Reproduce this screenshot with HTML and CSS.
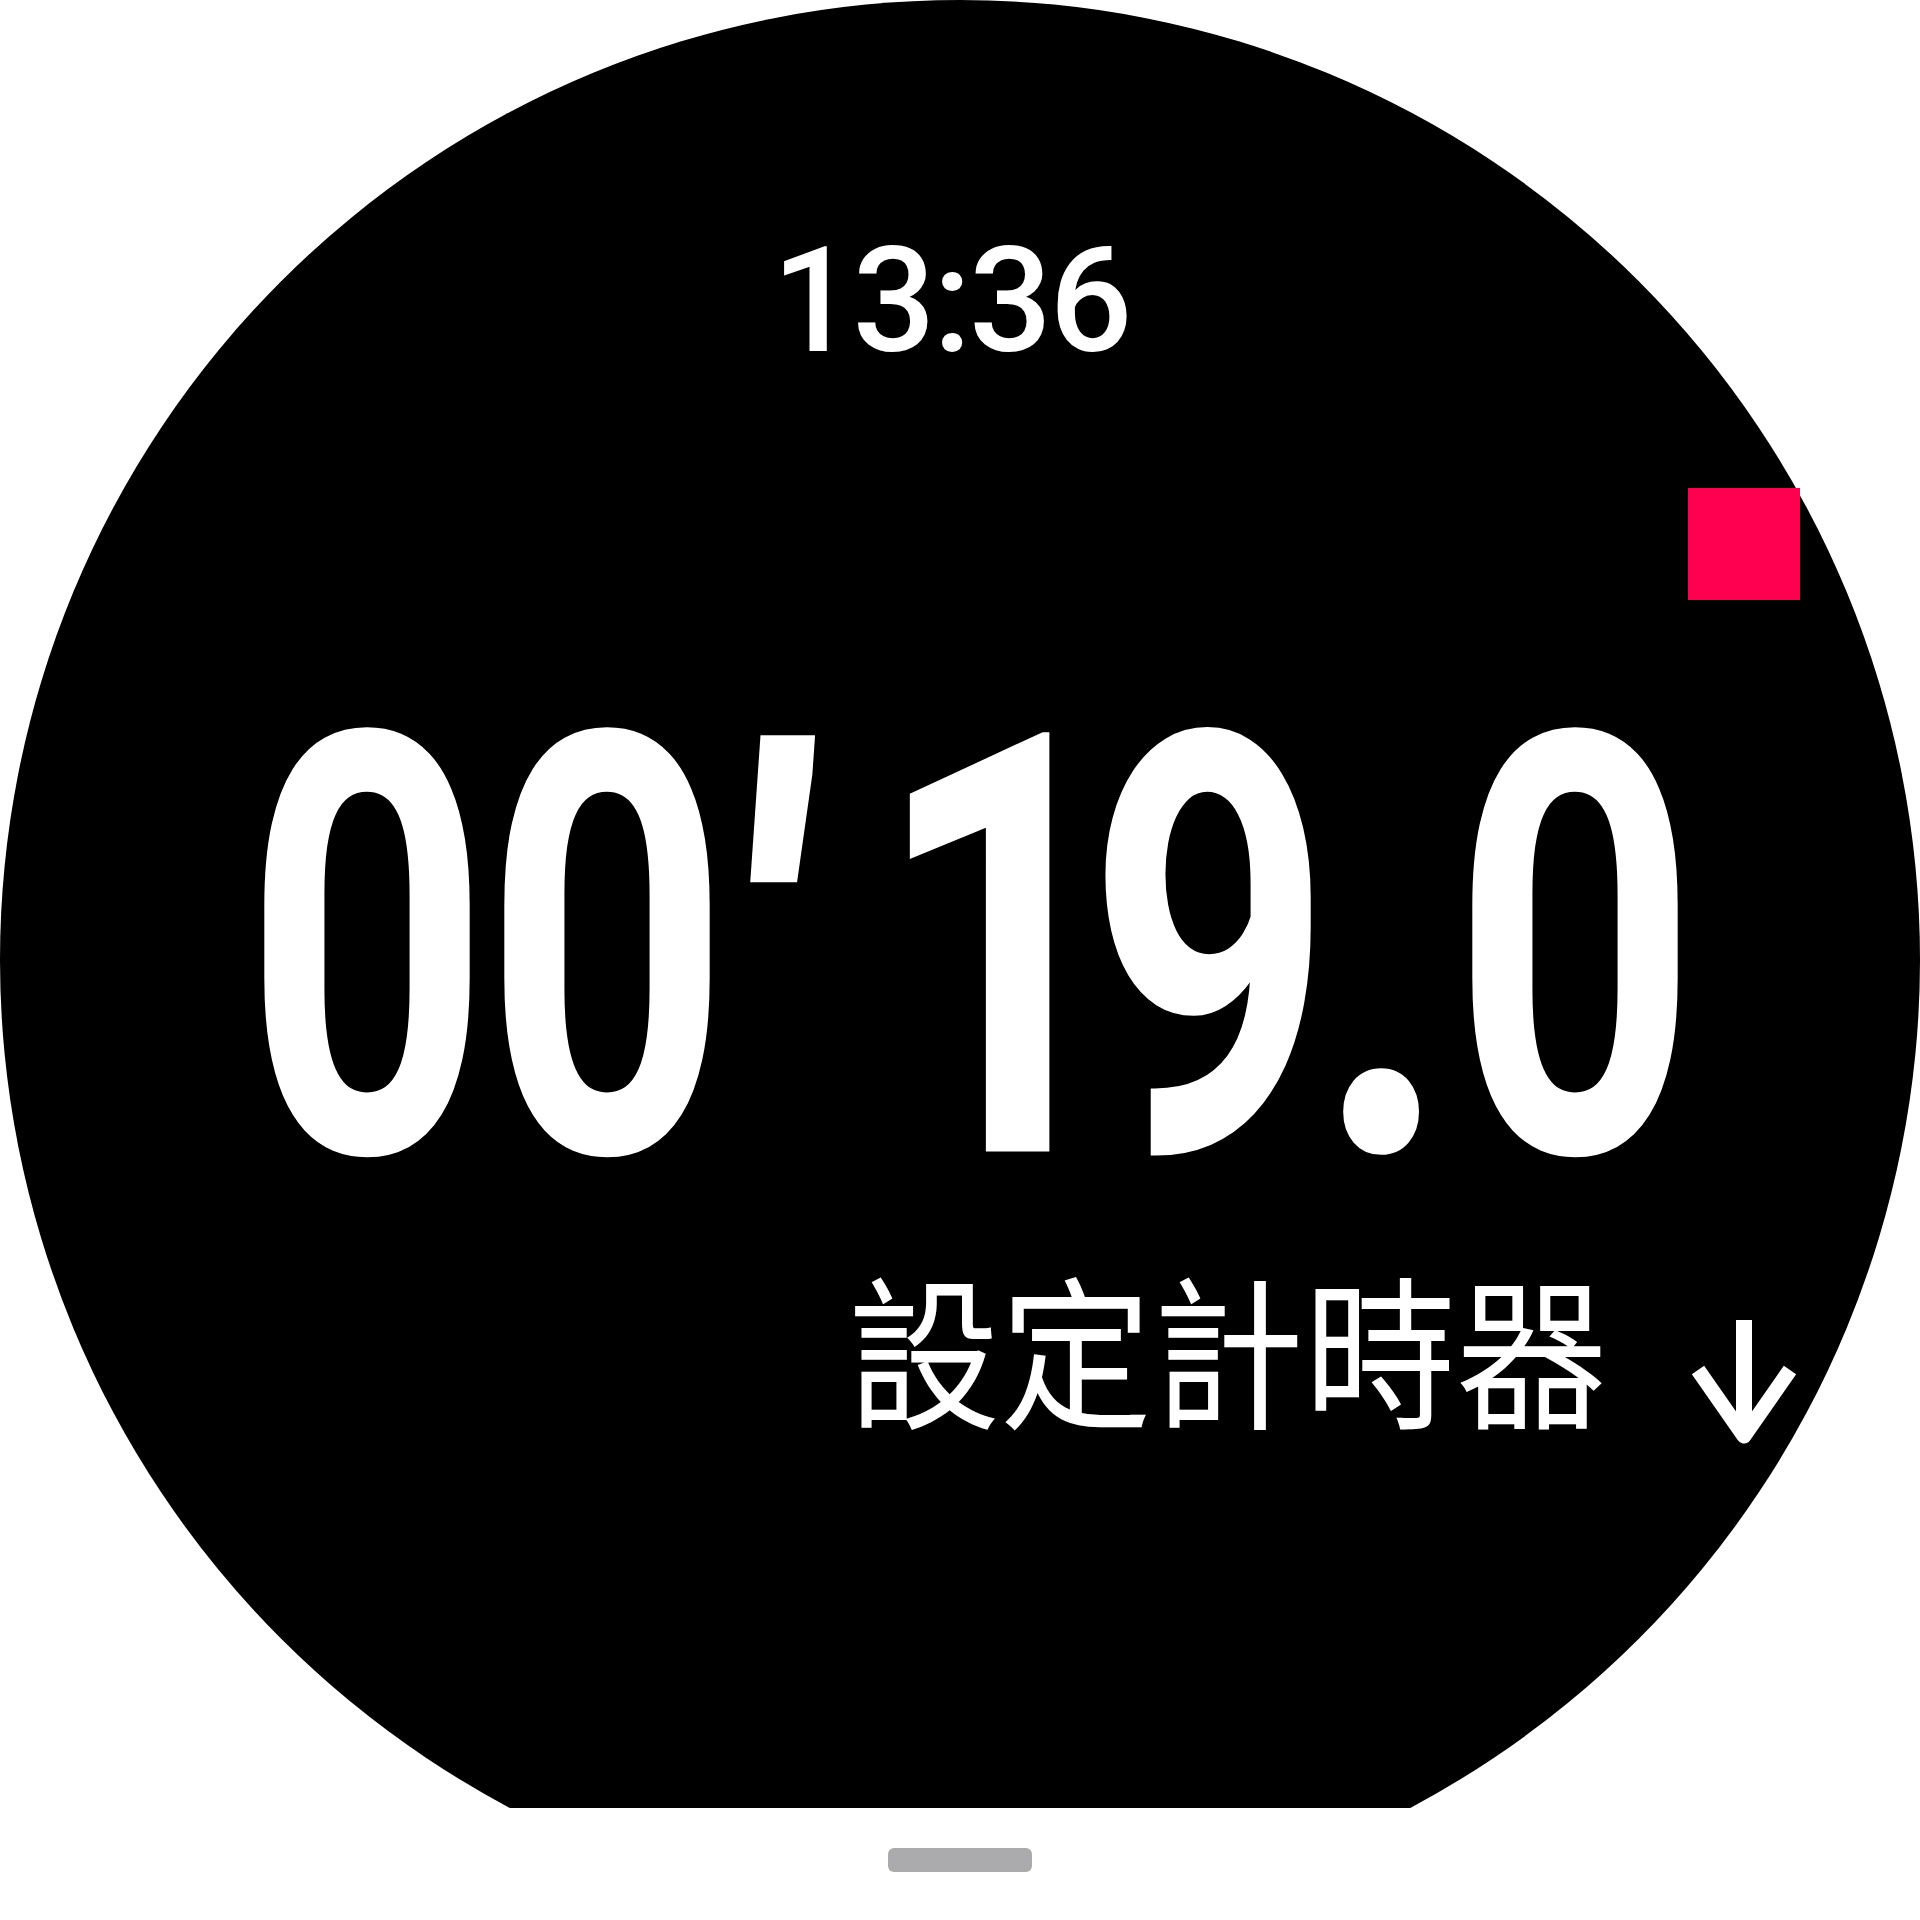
FILE: index.html
```html
<!DOCTYPE html>
<html lang="zh-Hant">
<head>
<meta charset="utf-8">
<title>設定計時器</title>
<link rel="stylesheet" href="styles.css">
</head>
<body>
<div class="device">
  <div class="bezel">
    <div class="face">
      <div class="clock">13:36</div>
      <span class="rec"></span>
      <div class="elapsed">
        <span class="cell c0"><span class="glyph">0</span></span>
        <span class="cell c1"><span class="glyph">0</span></span>
        <span class="cell c2"><span class="glyph tick">'</span></span>
        <span class="cell c3"><span class="glyph one">1</span></span>
        <span class="cell c4"><span class="glyph">9</span></span>
        <span class="cell c5"><span class="glyph dot">.</span></span>
        <span class="cell c6"><span class="glyph">0</span></span>
      </div>
      <div class="caption">
        <span class="caption-text">設定計時器</span>
        <svg class="arrow" viewBox="0 0 112 128" aria-hidden="true">
          <line x1="56" y1="0" x2="56" y2="114" stroke="#fff" stroke-width="16"/>
          <polyline points="10,50 56,116 102,50" fill="none" stroke="#fff" stroke-width="15" stroke-linejoin="round"/>
        </svg>
      </div>
    </div>
  </div>
  <div class="handle"></div>
</div>
</body>
</html>
```
FILE: styles.css
```css
html, body {
  margin: 0;
  padding: 0;
  background: #ffffff;
}

.device {
  width: 1920px;
  display: flex;
  flex-direction: column;
  align-items: center;
}

.bezel {
  width: 1920px;
  height: 1808px;
  overflow: hidden;
}

.face {
  position: relative;
  box-sizing: border-box;
  width: 1920px;
  height: 1920px;
  border-radius: 50%;
  background: #000000;
  color: #ffffff;
  display: flex;
  flex-direction: column;
  padding-top: 229px;
}

.clock {
  font-family: Roboto, "Liberation Sans", sans-serif;
  font-weight: 500;
  font-size: 146px;
  line-height: 146px;
  height: 146px;
  text-align: center;
  letter-spacing: -2.5px;
  padding-right: 18px;
}

.rec {
  position: absolute;
  left: 1688px;
  top: 488px;
  width: 112px;
  height: 112px;
  background: #ff0050;
}

.elapsed {
  display: flex;
  margin-top: 275px;
  height: 602px;
  font-family: Roboto, "Liberation Sans", sans-serif;
  font-weight: 700;
  font-size: 602px;
  line-height: 602px;
  letter-spacing: -60px;
}

.cell {
  flex: 0 0 0px;
  width: 0;
  min-width: 0;
  display: flex;
  justify-content: center;
}

.glyph {
  display: block;
  flex: none;
  transform: scale(0.71, 0.978);
}

.glyph.one {
  transform: scale(0.75, 0.978);
}

.glyph.dot {
  transform: scale(0.79, 0.978);
}

.glyph.tick {
  transform: translateY(11px) skewX(-4deg) scale(0.88, 0.92);
}

.c0 { margin-left: 346px; }
.c1 { margin-left: 240px; }
.c2 { margin-left: 158px; }
.c3 { margin-left: 236px; }
.c4 { margin-left: 209px; }
.c5 { margin-left: 170px; }
.c6 { margin-left: 195px; }

.caption {
  display: flex;
  align-items: flex-start;
  margin-top: 11px;
  padding-left: 848px;
}

.caption-text {
  display: block;
  font-family: "Noto Sans CJK TC", "Noto Sans CJK SC", sans-serif;
  font-weight: 400;
  font-size: 152px;
  line-height: 152px;
  white-space: nowrap;
  transform: scaleY(1.08);
  transform-origin: top center;
}

.arrow {
  flex: none;
  width: 112px;
  height: 128px;
  margin-left: 80px;
  margin-top: 57px;
}

.handle {
  width: 144px;
  height: 24px;
  margin-top: 40px;
  background: #abaaac;
  border-radius: 6px;
}
```
